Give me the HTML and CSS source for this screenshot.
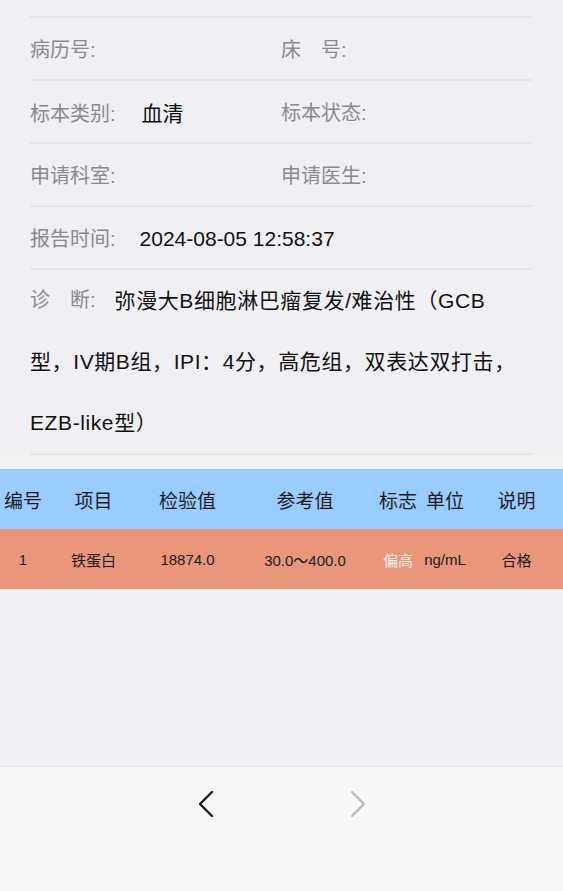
FILE: index.html
```html
<!DOCTYPE html>
<html>
<head>
    <title>检验报告</title>
    <link rel="stylesheet" href="styles.css">
</head>
<body>
    <div class="page">
        <div class="content">
            <div class="info">
                <div class="row">
                    <div class="cell"><span class="label">病历号:</span></div>
                    <div class="cell"><span class="label">床　号:</span></div>
                </div>
                <div class="row">
                    <div class="cell"><span class="label">标本类别:</span><span class="value">血清</span></div>
                    <div class="cell"><span class="label">标本状态:</span></div>
                </div>
                <div class="row">
                    <div class="cell"><span class="label">申请科室:</span></div>
                    <div class="cell"><span class="label">申请医生:</span></div>
                </div>
                <div class="row">
                    <div class="cell cell-full"><span class="label">报告时间:</span><span class="value">2024-08-05 12:58:37</span></div>
                </div>
                <div class="row row-text">
                    <span class="label">诊　断:</span><span class="value value-long">弥漫大B细胞淋巴瘤复发/难治性（GCB型，IV期B组，IPI：4分，高危组，双表达双打击，EZB-like型）</span>
                </div>
            </div>
            <div class="spacer"></div>

            <div class="result">
                <div class="result-row result-head">
                    <div>编号</div>
                    <div>项目</div>
                    <div>检验值</div>
                    <div>参考值</div>
                    <div>标志</div>
                    <div>单位</div>
                    <div>说明</div>
                </div>
                <div class="result-row result-high">
                    <div>1</div>
                    <div>铁蛋白</div>
                    <div>18874.0</div>
                    <div>30.0～400.0</div>
                    <div class="flag">偏高</div>
                    <div>ng/mL</div>
                    <div>合格</div>
                </div>
            </div>
        </div>

        <div class="toolbar">
            <button class="nav-btn" type="button">
                <svg width="18" height="28" viewBox="0 0 18 28">
                    <path d="M15 2 L3 14 L15 26" fill="none" stroke="#1c1c1e" stroke-width="2.4" stroke-linecap="round" stroke-linejoin="round"/>
                </svg>
            </button>
            <button class="nav-btn" type="button" disabled>
                <svg width="18" height="28" viewBox="0 0 18 28">
                    <path d="M3 2 L15 14 L3 26" fill="none" stroke="#b8b8bb" stroke-width="2.4" stroke-linecap="round" stroke-linejoin="round"/>
                </svg>
            </button>
        </div>
    </div>
</body>
</html>
```

FILE: styles.css
```css
body {
    margin: 0;
    font-family: "Liberation Sans", "Noto Sans CJK SC", sans-serif;
    background-color: #efeff4;
}

.page {
    display: flex;
    flex-direction: column;
    height: 100vh;
}

.content {
    flex: 1;
}

.info {
    padding: 16px 31px 0 30px;
}

.row {
    display: flex;
    height: 61px;
    align-items: center;
    border-top: 2px solid #e4e4e9;
    font-size: 20px;
}

.row-text {
    display: block;
    height: auto;
    padding-right: 10px;
    font-size: 21px;
    line-height: 61px;
    border-bottom: 2px solid #e4e4e9;
}

.row-text .label {
    font-size: 20px;
    vertical-align: top;
}

.cell {
    flex: 0 0 251px;
}

.cell-full {
    flex: 1;
}

.label {
    color: #8a8a8e;
}

.value {
    color: #111;
    font-size: 21px;
    margin-left: 26px;
}

.cell-full .value {
    margin-left: 24px;
}

.value-long {
    margin-left: 19px;
    letter-spacing: 0.6px;
}

.spacer {
    height: 14px;
    background: #f2f2f3;
}

.result-row {
    display: grid;
    grid-template-columns: 46px 95px 93px 142px 44px 50px 93px;
    align-items: center;
    height: 60px;
    text-align: center;
    color: #1c1c1e;
}

.result-head {
    background: #99ccff;
    font-size: 19px;
}

.result-high {
    background: #e9967b;
    font-size: 15px;
}

.result-high .flag {
    color: #fdf0ea;
}

.toolbar {
    display: flex;
    justify-content: center;
    align-items: flex-start;
    gap: 112px;
    height: 124px;
    background: #f7f7f7;
    border-top: 1px solid #e2e2e6;
}

.nav-btn {
    width: 40px;
    height: 50px;
    margin-top: 12px;
    padding: 0;
    border: none;
    background: none;
    display: flex;
    align-items: center;
    justify-content: center;
}
```
